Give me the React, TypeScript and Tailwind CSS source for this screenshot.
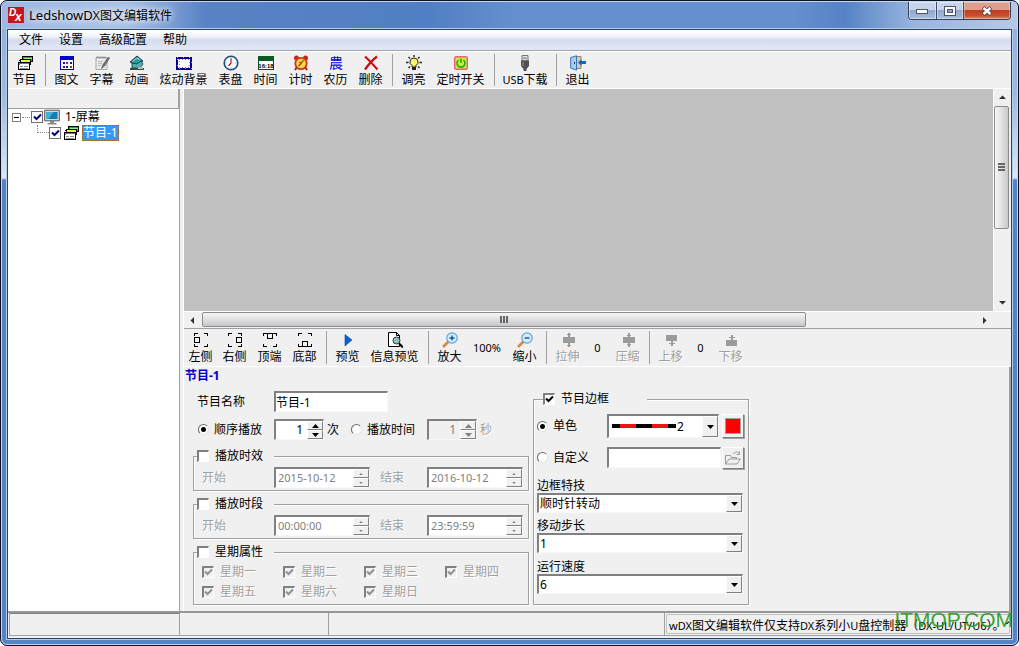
import React, { useState } from 'react';

const EDGE = 'border-t-2 border-l-2 border-r border-b border-t-[#808080] border-l-[#808080] border-r-[#f8f8f8] border-b-[#f8f8f8]';
const RAISED = 'border border-t-white border-l-white border-r-[#808080] border-b-[#808080] bg-[#f0f0f0]';

interface IconProps {
  children: React.ReactNode;
  w?: number;
  smooth?: boolean;
}

const Icon: React.FC<IconProps> = ({ children, w = 16, smooth }) => (
  <svg width={w} height="16" viewBox={`0 0 ${w} 16`} fill="none" shapeRendering={smooth ? 'auto' : 'crispEdges'} aria-hidden="true" className="shrink-0">
    {children}
  </svg>
);

const ProgramIcon = () => (
  <Icon>
    <path d="M5.500 1.500h10v5h-10z" fill="#1db81d" stroke="#000" />
    <path d="M7 3h8" stroke="#8df58d" />
    <path d="M3.500 4.500h10v5h-10z" fill="#f4f43a" stroke="#000" />
    <path d="M1.500 7.500h11v7h-11z" fill="#fff" stroke="#000" />
    <path d="M2 8.500h10M2 9.500h1" stroke="#22b522" />
    <path d="M3 11.500h3M7 11.500h4M3 13h8" stroke="#888" />
    <path d="M2 6l2-2M13 8l2-2" stroke="#000" />
  </Icon>
);

const GraphicIcon = () => (
  <Icon>
    <path d="M1.500 1.500h13v13h-13z" fill="#fff" stroke="#0000c8" />
    <path d="M1 1h14v4H1z" fill="#0000c8" />
    <path d="M4 7h2v2H4zM11 7h2v2h-2zM7 11h2v2H7z" fill="#1414c8" />
    <path d="M7 7h2v2H7zM11 11h2v2h-2z" fill="#c81446" />
    <path d="M4 11h2v2H4z" fill="#4b1478" />
  </Icon>
);

const SubtitleIcon = () => (
  <Icon smooth>
    <path d="M2 2.500h11v12H2z" fill="#e9e9e9" stroke="#aaa" />
    <path d="M3 1.500v2M5 1.500v2M7 1.500v2M9 1.500v2M11 1.500v2" stroke="#777" />
    <path d="M4 6.500h5M4 8.500h4M4 10.500h3" stroke="#bbb" />
    <path d="M14.500 2L9 9.500l-1.500 4 3.500-3L15.500 3z" fill="#777" stroke="#444" strokeWidth=".6" />
  </Icon>
);

const AnimationIcon = () => (
  <Icon smooth>
    <path d="M1 7l7-6 6 5-6 5z" fill="#2b9c9c" stroke="#114" strokeWidth=".8" />
    <path d="M3.500 6.500L8 3l3 2" stroke="#8fe0e0" />
    <path d="M3 8v5h8l3-4-2-3-4 3z" fill="#4fb0b0" stroke="#033" strokeWidth=".8" />
    <path d="M1 13h14v2H1z" fill="#3c4a4a" />
    <path d="M9 12h5v2H9z" fill="#bbb" />
  </Icon>
);

const BackgroundIcon = () => (
  <Icon w={18}>
    <path d="M2 2.500h14v11H2z" fill="#fff" stroke="#000090" strokeWidth="2" />
    <path d="M2 2.500h14v11H2z" stroke="#35bdf5" strokeWidth="1" strokeDasharray="1 5" />
    <path d="M4 4.500h10v7.500H4z" stroke="#e644a4" strokeDasharray="1 2" />
  </Icon>
);

const DialIcon = () => (
  <Icon smooth>
    <circle cx="8" cy="8" r="6.800" fill="#fff" stroke="#1c4f86" strokeWidth="1.600" />
    <path d="M8 2.500v1M8 12.500v1M2.500 8h1M12.500 8h1" stroke="#49a" />
    <path d="M8 3.500V8l-2.500 3" stroke="#b01020" strokeWidth="1.200" />
  </Icon>
);

const TimeIcon = () => (
  <Icon>
    <path d="M.5 1.500h15v13H.5z" fill="#fff" stroke="#064f1c" />
    <path d="M0 1h16v5H0z" fill="#0a5a24" />
    <text x="8" y="12.500" textAnchor="middle" fontSize="6" fontWeight="bold" fontFamily="Liberation Sans, sans-serif" fill="#000">16:18</text>
  </Icon>
);

const AlarmIcon = () => (
  <Icon smooth>
    <circle cx="3.500" cy="3" r="2.500" fill="#c4281c" />
    <circle cx="12.500" cy="3" r="2.500" fill="#c4281c" />
    <path d="M4 12l-2 3M12 12l2 3" stroke="#a0220f" strokeWidth="2" />
    <circle cx="8" cy="8.500" r="5.700" fill="#ffd34c" stroke="#cc3a1c" strokeWidth="1.800" />
    <path d="M5.500 11L8 8.500l2.500-3.500M8 8.500L6.500 7" stroke="#7a5200" strokeWidth="1.200" />
  </Icon>
);

const LunarIcon = () => (
  <Icon w={18}>
    <text x="9" y="13" textAnchor="middle" fontSize="14" fontFamily="Noto Sans CJK SC, sans-serif" fill="#0000e0">農</text>
  </Icon>
);

const DeleteIcon = () => (
  <Icon smooth>
    <path d="M2 1.500Q7 6 14.500 14.500M14 1.500Q8 6 2 14.500" stroke="#c80f14" strokeWidth="2.200" />
  </Icon>
);

const BulbIcon = () => (
  <Icon smooth>
    <path d="M8 0v2M2.500 2l1.500 1.500M13.500 2L12 3.500M0 7.500h2.500M13.500 7.500H16M2.500 13L4 11.500M13.500 13L12 11.500" stroke="#222" strokeWidth="1.400" />
    <path d="M8 3a4 4 0 0 0-2 7.500V12h4v-1.500A4 4 0 0 0 8 3z" fill="#f8f060" stroke="#222" />
    <path d="M6 12h4v3H6z" fill="#222" />
    <path d="M7 5.500v3" stroke="#fff" />
  </Icon>
);

const PowerIcon = () => (
  <Icon smooth>
    <rect x="1.700" y="1.700" width="12.600" height="12.600" rx="1.500" fill="#c5ee3c" stroke="#ec5f7c" strokeWidth="1.400" />
    <path d="M5.500 5a4 4 0 1 0 5 0M8 3.500v4.500" stroke="#35a512" strokeWidth="1.600" />
  </Icon>
);

const UsbIcon = () => (
  <Icon smooth>
    <path d="M5 .5h6V6H5z" fill="#ddd" stroke="#777" />
    <path d="M6.500 2.500h1v1.500h-1zM8.500 2.500h1v1.500h-1z" fill="#555" />
    <path d="M4 5.500h8V11l-2.500 3v2h-3v-2L4 11z" fill="#4f4f55" />
    <path d="M6 7v4" stroke="#999" />
  </Icon>
);

const ExitIcon = () => (
  <Icon smooth>
    <path d="M5 1.500h6v12H5z" fill="#d9c9a5" stroke="#9a8763" />
    <path d="M.7 2.500L6.500.8v14.400L.7 13z" fill="#a6cdf2" stroke="#3b75b8" />
    <path d="M4.500 7v2" stroke="#234" />
    <path d="M8 7.500L11.500 4v2H16v3h-4.500v2z" fill="#1766c6" />
  </Icon>
);

// corner brackets shared by the four dock icons; `d` is the docked box
const DockIcon = ({ d }: { d: string }) => (
  <Icon>
    <path d="M1.500 4V1.500H5M11 1.500h3.500V4M14.500 12v2.500H11M5 14.500H1.500V12" stroke="#000" />
    <path d={d} stroke="#000" />
  </Icon>
);

const PlayIcon = () => (
  <Icon smooth>
    <path d="M5 2.500l7 5.500-7 6z" fill="#0a63cc" stroke="#0a4aa0" strokeWidth=".6" />
  </Icon>
);

const InfoIcon = () => (
  <Icon smooth>
    <path d="M1.500 .5h8l3 3v11h-11z" fill="#fff" stroke="#000" />
    <path d="M9.500.5v3h3" stroke="#000" />
    <circle cx="9.500" cy="8.500" r="3.500" fill="#8fc4c4" stroke="#333" />
    <path d="M12 11.500l4 4" stroke="#000" strokeWidth="2" />
  </Icon>
);

const ZoomIcon = ({ plus }: { plus?: boolean }) => (
  <Icon smooth>
    <path d="M6.500 9.500L1 15" stroke="#d08b45" strokeWidth="2.600" />
    <circle cx="10" cy="6" r="5.200" fill="#d6eeff" stroke="#5d9fe0" strokeWidth="1.200" />
    <path d={plus ? 'M7.500 6h5M10 3.500v5' : 'M7.500 6h5'} stroke="#1a4f9c" strokeWidth="1.400" />
  </Icon>
);

const ShiftIcon = ({ d }: { d: string }) => (
  <Icon>
    <path d={d} fill="#9b9b9b" />
  </Icon>
);

const MonitorIcon = () => (
  <Icon smooth>
    <path d="M.7 1.200h14.600v10.600H.7z" fill="#d8d8d8" stroke="#555" />
    <path d="M2.500 3h11v7h-11z" fill="#0e7fb0" />
    <path d="M2.500 3h7l-5 7h-2z" fill="#3fb1d6" />
    <path d="M6 12h4v2H6zM3.500 14h9v1.500h-9z" fill="#888" />
  </Icon>
);

// Latin runs are set a size smaller than the Chinese around them
const Latin = ({ children }: { children: React.ReactNode }) => <span className="text-[11px]">{children}</span>;

interface ToolButtonProps {
  icon: React.ReactNode;
  text: React.ReactNode;
  width?: string;
  disabled?: boolean;
}

const ToolButton: React.FC<ToolButtonProps> = ({ icon, text, width = 'w-[35px]', disabled }) => (
  <button
    type="button"
    disabled={disabled}
    className={`flex shrink-0 flex-col items-center pt-[3px] whitespace-nowrap ${width} ${disabled ? 'text-[#a0a0a0] [text-shadow:1px_1px_0_#fff]' : 'text-black'}`}
  >
    {icon}
    <span className="leading-[18px]">{text}</span>
  </button>
);

const Separator = () => (
  <div className="flex w-2 shrink-0 justify-center py-[2px]">
    <span className="w-px bg-[#a0a0a0]" />
  </div>
);

const ToolValue = ({ children, className }: { children: React.ReactNode; className: string }) => (
  <span className={`flex shrink-0 items-center justify-center text-[11px] ${className}`}>{children}</span>
);

interface TickProps {
  label: string;
  defaultChecked?: boolean;
  disabled?: boolean;
  flat?: boolean;
  hideLabel?: boolean;
}

const Tick: React.FC<TickProps> = ({ label, defaultChecked, disabled, flat, hideLabel }) => (
  <label className={`flex items-center gap-[6px] leading-4 whitespace-nowrap ${disabled ? 'text-[#a0a0a0] [text-shadow:1px_1px_0_#fff]' : ''}`}>
    <span className="relative block size-3 shrink-0">
      <input
        type="checkbox"
        aria-label={label}
        defaultChecked={defaultChecked}
        disabled={disabled}
        className={`peer block size-3 appearance-none ${flat ? 'border border-[#707070] bg-white' : 'border-t-2 border-l-2 border-r border-b border-t-[#808080] border-l-[#808080] border-r-white border-b-white bg-white disabled:bg-[#f0f0f0]'}`}
      />
      <svg viewBox="0 0 12 12" className="pointer-events-none absolute inset-0 hidden size-3 peer-checked:block" fill="none" aria-hidden="true">
        <path d="M3 5.500l2.500 2.500L10 3.500" stroke={disabled ? '#909090' : flat ? '#000080' : '#000'} strokeWidth="2" />
      </svg>
    </span>
    {!hideLabel && label}
  </label>
);

const Radio = ({ name, label, defaultChecked, className = '' }: { name: string; label: string; defaultChecked?: boolean; className?: string }) => (
  <label className={`flex items-center gap-[5px] leading-4 whitespace-nowrap ${className}`}>
    <input
      type="radio"
      name={name}
      defaultChecked={defaultChecked}
      className="size-[11px] shrink-0 appearance-none rounded-full border border-t-[#696969] border-l-[#696969] border-r-[#e3e3e3] border-b-[#e3e3e3] bg-white checked:bg-[radial-gradient(circle,#000_0_2px,#fff_3px)]"
    />
    {label}
  </label>
);

const Arrow = ({ up, className = '' }: { up?: boolean; className?: string }) => (
  <svg width="7" height="4" viewBox="0 0 7 4" className={className} aria-hidden="true">
    <path d={up ? 'M0 4L3.500 0 7 4z' : 'M0 0h7L3.500 4z'} fill="currentColor" />
  </svg>
);

const Spin = ({ label, value, disabled, date }: { label: string; value: string; disabled?: boolean; date?: boolean }) => (
  <span className={`flex h-[21px] shrink-0 ${EDGE} ${date ? 'w-24' : 'w-[50px]'} ${disabled && !date ? 'bg-[#f0f0f0]' : 'bg-white'} ${disabled ? 'text-[#808080]' : 'text-black'}`}>
    <input
      aria-label={label}
      defaultValue={value}
      disabled={disabled}
      className={`w-0 min-w-0 flex-1 bg-transparent px-[2px] outline-none ${date ? 'text-[11px]' : 'pr-1 text-right'}`}
    />
    <span className="flex w-4 flex-col">
      <button type="button" aria-label={`${label} +`} disabled={disabled} className={`flex flex-1 items-center justify-center ${RAISED}`}>
        <Arrow up className={date ? 'h-[2px] w-1' : 'w-[7px]'} />
      </button>
      <button type="button" aria-label={`${label} -`} disabled={disabled} className={`flex flex-1 items-center justify-center ${RAISED}`}>
        <Arrow className={date ? 'h-[2px] w-1' : 'w-[7px]'} />
      </button>
    </span>
  </span>
);

const Combo = ({ id, options, line }: { id: string; options: string[]; line?: boolean }) => (
  <span className={`relative flex ${EDGE} bg-white ${line ? 'h-6 w-[112px] shrink-0' : 'h-5 w-full'}`}>
    <select id={id} aria-label={line ? '单色' : undefined} className={`h-full w-full appearance-none bg-transparent outline-none ${line ? 'pl-[68px]' : 'pl-px'}`}>
      {options.map((o) => (
        <option key={o}>{o}</option>
      ))}
    </select>
    {line && (
      <svg width="64" height="4" className="pointer-events-none absolute top-2 left-[3px]" aria-hidden="true">
        <path d="M0 2h64" stroke="#000" strokeWidth="4" />
        <path d="M8 2h16M40 2h16" stroke="#e8151b" strokeWidth="4" />
      </svg>
    )}
    <span className={`pointer-events-none absolute inset-y-0 right-0 flex w-4 items-center justify-center ${RAISED}`}>
      <Arrow />
    </span>
  </span>
);

const GROUP = 'border border-[#a0a0a0] shadow-[1px_1px_0_#fff,inset_1px_1px_0_#fff]';

const Period = ({ title, from, to }: { title: string; from: string; to: string }) => (
  <fieldset className={`mb-[5px] pb-[2px] ${GROUP}`}>
    <legend className="ml-[3px] w-[77px] bg-[#f0f0f0]">
      <Tick label={title} />
    </legend>
    <div className="flex items-center pt-[3px] pl-2 text-[#a0a0a0] [text-shadow:1px_1px_0_#fff]">
      <span className="w-[72px]">开始</span>
      <Spin label={`${title} 开始`} value={from} disabled date />
      <span className="w-[57px] pl-[10px]">结束</span>
      <Spin label={`${title} 结束`} value={to} disabled date />
    </div>
  </fieldset>
);

const ScrollArrow = ({ dir }: { dir: 'up' | 'down' | 'left' | 'right' }) => {
  const paths = { up: 'M0 5L3.500 1.500 7 5z', down: 'M0 2h7L3.500 5.500z', left: 'M5 0v7L1.500 3.500z', right: 'M2 0v7l3.500-3.500z' };
  return (
    <button type="button" aria-label={dir} className="flex size-[17px] shrink-0 items-center justify-center">
      <svg width="7" height="7" viewBox="0 0 7 7" aria-hidden="true">
        <path d={paths[dir]} fill="#303030" />
      </svg>
    </button>
  );
};

const weekdays = ['星期一', '星期二', '星期三', '星期四', '星期五', '星期六', '星期日'];
const captionButton = 'flex items-center justify-center border-r border-[#3a4a68] shadow-[inset_0_0_0_1px_rgba(255,255,255,0.45)]';

export default function App() {
  const [programName, setProgramName] = useState('节目-1');

  return (
    <div className="h-screen bg-white">
      <div className="relative flex h-full flex-col overflow-hidden rounded-[7px] border border-[#0b1322] bg-[#5583c6] font-['Noto_Sans','Noto_Sans_CJK_SC',sans-serif] text-xs leading-4 text-black">
        <div className="flex min-h-0 flex-1 flex-col rounded-[6px] border border-[#c3d8f2] bg-[linear-gradient(#91afdd_0px,#9db8e2_90px,#dbe7f6_176px,#5583c6_178px)]">
          <header className="flex h-[27px] shrink-0 items-start bg-[linear-gradient(90deg,#9fb9e2_0%,#a9c0e4_12%,#5883c5_20%,#507fc3_42%,#638fce_50%,#6590cf_78%,#5583c6_83%,#9ab5de_90%,#b7c9e6_100%)] pl-[6px]">
            <svg width="16" height="16" viewBox="0 0 16 16" className="mt-[5px]" aria-hidden="true">
              <rect width="16" height="16" fill="#c4161c" />
              <text x="1" y="9" fontSize="10" fontWeight="bold" fontStyle="italic" fontFamily="Liberation Sans, sans-serif" fill="#fff">D</text>
              <text x="7" y="14" fontSize="12" fontWeight="bold" fontStyle="italic" fontFamily="Liberation Sans, sans-serif" fill="#fff">x</text>
            </svg>
            <h1 className="mt-[5px] ml-[5px] flex-1 leading-4 [text-shadow:0_0_6px_#fff,0_0_10px_#fff]">
              <span className="text-[13px]">LedshowDX</span>图文编辑软件
            </h1>
            <div className="mr-[6px] flex h-[18px] overflow-hidden rounded-b-[4px] border border-t-0 border-[#33415c]">
              <button type="button" aria-label="最小化" className={`w-7 bg-[linear-gradient(#c6d3e8_0_45%,#8fa6cb_46%,#a9bddc)] ${captionButton}`}>
                <svg width="13" height="6" aria-hidden="true">
                  <rect x=".5" y="1.500" width="11" height="4" fill="#fff" stroke="#4c5567" />
                </svg>
              </button>
              <button type="button" aria-label="最大化" className={`w-[27px] bg-[linear-gradient(#c6d3e8_0_45%,#8fa6cb_46%,#a9bddc)] ${captionButton}`}>
                <svg width="12" height="10" aria-hidden="true">
                  <rect x=".5" y=".5" width="11" height="9" fill="#fff" stroke="#4c5567" />
                  <rect x="3.500" y="3.500" width="5" height="3" fill="#8fa6cb" stroke="#4c5567" />
                </svg>
              </button>
              <button type="button" aria-label="关闭" className="flex w-[46px] items-center justify-center bg-[linear-gradient(#e09d8c_0_45%,#bd3a20_46%,#c8502f_80%,#dc8a66)] shadow-[inset_0_0_0_1px_rgba(255,255,255,0.35)]">
                <svg width="12" height="10" aria-hidden="true">
                  <path d="M2 1.500l8 7M10 1.500l-8 7" stroke="#5a4548" strokeWidth="4" />
                  <path d="M2.500 2l7 6M9.500 2l-7 6" stroke="#fff" strokeWidth="2.400" />
                </svg>
              </button>
            </div>
          </header>

          <div className="mx-[5px] mb-[5px] flex min-h-0 flex-1 flex-col border border-[#2b436b] bg-[#f0f0f0] shadow-[0_0_0_1px_#b4cbea]">
            <nav className="flex h-[21px] shrink-0 items-center gap-4 border-b border-[#a0a4ac] bg-[linear-gradient(#fff_0,#f3f5fa_30%,#d6dced_50%,#e0e6f4_90%)] pl-[11px]">
              <button type="button">文件</button>
              <button type="button">设置</button>
              <button type="button">高级配置</button>
              <button type="button">帮助</button>
            </nav>

            <div className="flex h-[38px] shrink-0 border-y border-white">
              <ToolButton icon={<ProgramIcon />} text="节目" width="w-[33px]" />
              <Separator />
              <ToolButton icon={<GraphicIcon />} text="图文" />
              <ToolButton icon={<SubtitleIcon />} text="字幕" />
              <ToolButton icon={<AnimationIcon />} text="动画" />
              <ToolButton icon={<BackgroundIcon />} text="炫动背景" width="w-[59px]" />
              <ToolButton icon={<DialIcon />} text="表盘" />
              <ToolButton icon={<TimeIcon />} text="时间" />
              <ToolButton icon={<AlarmIcon />} text="计时" />
              <ToolButton icon={<LunarIcon />} text="农历" />
              <ToolButton icon={<DeleteIcon />} text="删除" />
              <Separator />
              <ToolButton icon={<BulbIcon />} text="调亮" />
              <ToolButton icon={<PowerIcon />} text="定时开关" width="w-[59px]" />
              <Separator />
              <ToolButton icon={<UsbIcon />} text={<><Latin>USB</Latin>下载</>} width="w-[54px]" />
              <Separator />
              <ToolButton icon={<ExitIcon />} text="退出" />
            </div>

            <div className="flex min-h-0 flex-1">
              <aside className="flex w-[172px] shrink-0 flex-col border-r border-[#a0a0a0] bg-white">
                <div className="h-5 shrink-0 border-r border-b border-[#a0a0a0] bg-[#f0f0f0]" />
                <ul>
                  <li>
                    <div className="flex h-4 items-center pl-1">
                      <button type="button" aria-label="折叠" className="flex size-[9px] items-center justify-center border border-[#808080]">
                        <span className="h-px w-[5px] bg-black" />
                      </button>
                      <span className="mx-px w-2 border-t border-dotted border-[#808080]" />
                      <Tick label="1-屏幕" defaultChecked flat hideLabel />
                      <span className="ml-[1px] flex items-center gap-[5px]">
                        <MonitorIcon />
                        1-屏幕
                      </span>
                    </div>
                    <ul>
                      <li className="flex h-4 items-center pl-[29px]">
                        <span className="mb-2 h-2 w-3 border-b border-l border-dotted border-[#808080]" />
                        <Tick label="节目-1" defaultChecked flat hideLabel />
                        <span className="ml-[2px] flex items-center gap-[3px]">
                          <ProgramIcon />
                          <span className="bg-[#3399ff] px-px text-white outline-1 -outline-offset-1 outline-dotted outline-[#a0622a]">节目-1</span>
                        </span>
                      </li>
                    </ul>
                  </li>
                </ul>
              </aside>
              <div className="w-1 shrink-0 border-r border-white" />

              <main className="flex min-w-0 flex-1 flex-col">
                <div className="flex min-h-0 flex-1">
                  <div className="flex-1 bg-[#c0c0c0]" />
                  <div className="flex w-[18px] shrink-0 flex-col border-l border-white bg-[#f0f0f0]">
                    <ScrollArrow dir="up" />
                    <div className="mr-[2px] flex grow-[65] basis-0 flex-col items-center justify-center gap-px rounded-[2px] border border-[#8c8c8c] bg-[linear-gradient(90deg,#f6f6f6,#e4e4e6_45%,#c9c9cc)]">
                      <span className="h-[2px] w-[7px] bg-[#666]" />
                      <span className="h-[2px] w-[7px] bg-[#666]" />
                      <span className="h-[2px] w-[7px] bg-[#666]" />
                    </div>
                    <div className="grow-[35] basis-0" />
                    <ScrollArrow dir="down" />
                  </div>
                </div>
                <div className="flex h-[17px] shrink-0 border-t border-white pr-[18px]">
                  <ScrollArrow dir="left" />
                  <div className="mb-px ml-px flex grow-[78] basis-0 items-center justify-center gap-px rounded-[2px] border border-[#8c8c8c] bg-[linear-gradient(#f6f6f6,#e2e2e4_45%,#c6c6ca)]">
                    <span className="h-[7px] w-[2px] bg-[#666]" />
                    <span className="h-[7px] w-[2px] bg-[#666]" />
                    <span className="h-[7px] w-[2px] bg-[#666]" />
                  </div>
                  <div className="grow-[22] basis-0" />
                  <ScrollArrow dir="right" />
                </div>

                <div className="flex h-[39px] shrink-0 border-t border-b border-t-[#a0a0a0] border-b-white">
                  <ToolButton icon={<DockIcon d="M1.500 5.500h5v5h-5z" />} text="左侧" width="w-[33px]" />
                  <ToolButton icon={<DockIcon d="M9.500 5.500h5v5h-5z" />} text="右侧" />
                  <ToolButton icon={<DockIcon d="M5.500 1.500h5v5h-5z" />} text="顶端" />
                  <ToolButton icon={<DockIcon d="M5.500 9.500h5v5h-5z" />} text="底部" />
                  <Separator />
                  <ToolButton icon={<PlayIcon />} text="预览" />
                  <ToolButton icon={<InfoIcon />} text="信息预览" width="w-[59px]" />
                  <Separator />
                  <ToolButton icon={<ZoomIcon plus />} text="放大" />
                  <ToolValue className="w-10">100%</ToolValue>
                  <ToolButton icon={<ZoomIcon />} text="缩小" />
                  <Separator />
                  <ToolButton icon={<ShiftIcon d="M3 5h12v6H3zM8 1h2v4H8zM7 2h4v1H7zM8 11h2v4H8zM7 13h4v1H7z" />} text="拉伸" disabled />
                  <ToolValue className="w-[25px]">0</ToolValue>
                  <ToolButton icon={<ShiftIcon d="M3 5h12v6H3zM8 1h2v4H8zM7 3h4v1H7zM8 11h2v4H8zM7 12h4v1H7z" />} text="压缩" disabled />
                  <Separator />
                  <ToolButton icon={<ShiftIcon d="M3 3h11v6H3zM8 9h2v5H8zM6 11h6v1H6z" />} text="上移" disabled />
                  <ToolValue className="w-[25px]">0</ToolValue>
                  <ToolButton icon={<ShiftIcon d="M3 8h11v6H3zM8 3h2v5H8zM6 5h6v1H6z" />} text="下移" disabled />
                </div>

                <form className="shrink-0 border-r-2 border-[#a0a0a0] pb-[6px]" onSubmit={(e) => e.preventDefault()}>
                  <h2 className="h-[18px] pl-px leading-[18px] font-bold text-[#0000c8]">{programName}</h2>
                  <div className="flex gap-1 pt-[6px] pl-[9px]">
                    <div className="w-[336px] shrink-0">
                      <div className="flex h-[21px] items-center">
                        <label htmlFor="program-name" className="w-[81px] pl-1">节目名称</label>
                        <input
                          id="program-name"
                          value={programName}
                          onChange={(e) => setProgramName(e.target.value)}
                          className={`h-[21px] w-[114px] bg-white outline-none ${EDGE}`}
                        />
                      </div>
                      <div className="mt-[7px] mb-2 flex h-[21px] items-center">
                        <Radio name="play-mode" label="顺序播放" defaultChecked className="w-[81px] pl-[5px]" />
                        <Spin label="次" value="1" />
                        <span className="w-[27px] pl-[3px]">次</span>
                        <Radio name="play-mode" label="播放时间" className="w-[76px]" />
                        <Spin label="秒" value="1" disabled />
                        <span className="pl-[3px] text-[#a0a0a0] [text-shadow:1px_1px_0_#fff]">秒</span>
                      </div>
                      <Period title="播放时效" from="2015-10-12" to="2016-10-12" />
                      <Period title="播放时段" from="00:00:00" to="23:59:59" />
                      <fieldset className={`pb-1 ${GROUP}`}>
                        <legend className="ml-[3px] w-[77px] bg-[#f0f0f0]">
                          <Tick label="星期属性" />
                        </legend>
                        <div className="grid grid-cols-[repeat(4,81px)] gap-y-1 pt-1 pl-2">
                          {weekdays.map((day) => (
                            <Tick key={day} label={day} defaultChecked disabled />
                          ))}
                        </div>
                      </fieldset>
                    </div>

                    <fieldset className={`w-[215px] shrink-0 pr-1 pb-2 pl-[3px] ${GROUP}`}>
                      <legend className="ml-[6px] w-[104px] bg-[#f0f0f0]">
                        <Tick label="节目边框" defaultChecked />
                      </legend>
                      <div className="mt-[7px] flex h-6 items-start">
                        <Radio name="frame-mode" label="单色" defaultChecked className="h-6 w-[70px] shrink-0" />
                        <Combo id="frame-line" options={['2', '1', '3']} line />
                        <button type="button" aria-label="边框颜色" className={`ml-[3px] flex h-6 w-[22px] shrink-0 items-center justify-center shadow-[1px_1px_0_#a0a0a0] ${RAISED}`}>
                          <span className="size-4 border border-[#a0a0a0] bg-[#ff0000]" />
                        </button>
                      </div>
                      <div className="mt-2 flex h-[23px] items-center">
                        <Radio name="frame-mode" label="自定义" className="w-[70px] shrink-0" />
                        <input aria-label="自定义边框" className={`h-[21px] w-[114px] shrink-0 bg-white outline-none ${EDGE}`} />
                        <button type="button" aria-label="打开" className={`ml-px flex h-[22px] w-[22px] shrink-0 items-center justify-center shadow-[1px_1px_0_#a0a0a0] ${RAISED}`}>
                          <svg width="18" height="16" viewBox="0 0 18 16" fill="none" stroke="#9a9a9a" aria-hidden="true">
                            <path d="M1.500 14V5.500h5l1 2h5V9M1.500 14L5 9h11.500L13 14zM9.500 4c1.500-3 5-2.500 6 0M15.500 1.500V4.500h-3" />
                          </svg>
                        </button>
                      </div>
                      <div className="mt-[9px] flex flex-col pr-px">
                        <label htmlFor="effect" className="leading-[15px]">边框特技</label>
                        <Combo id="effect" options={['顺时针转动', '逆时针转动', '闪烁', '静止']} />
                        <label htmlFor="step" className="mt-[5px] leading-[15px]">移动步长</label>
                        <Combo id="step" options={['1', '2', '3', '4']} />
                        <label htmlFor="speed" className="mt-[6px] leading-[15px]">运行速度</label>
                        <Combo id="speed" options={['6', '1', '2', '3', '4', '5']} />
                      </div>
                    </fieldset>
                  </div>
                </form>
              </main>
            </div>

            <footer className="flex h-[27px] shrink-0 border-t-2 border-[#969696] pl-px pb-[2px]">
              <div className="w-[171px] shrink-0 border border-t-[#808080] border-[#a0a0a0]" />
              <div className="w-[149px] shrink-0 border-r border-b border-[#a0a0a0]" />
              <div className="flex-1 border-b border-[#a0a0a0]" />
              <div className="w-[347px] shrink-0 border-b border-l border-[#a0a0a0] p-px">
                <p className="h-full overflow-hidden rounded-[2px] border border-[#c0c0c0] pl-[2px] leading-[22px] whitespace-nowrap">
                  <Latin>wDX</Latin>图文编辑软件仅支持<Latin>DX</Latin>系列小<Latin>U</Latin>盘控制器（<Latin>DX-UL/UT/U6</Latin>）。个
                </p>
              </div>
            </footer>
          </div>
        </div>
        <div className="pointer-events-none absolute right-[5px] bottom-[15px] font-['Liberation_Sans',sans-serif] text-[21px] leading-5 text-[#259a18]/90">ITMOP.COM</div>
      </div>
    </div>
  );
}
